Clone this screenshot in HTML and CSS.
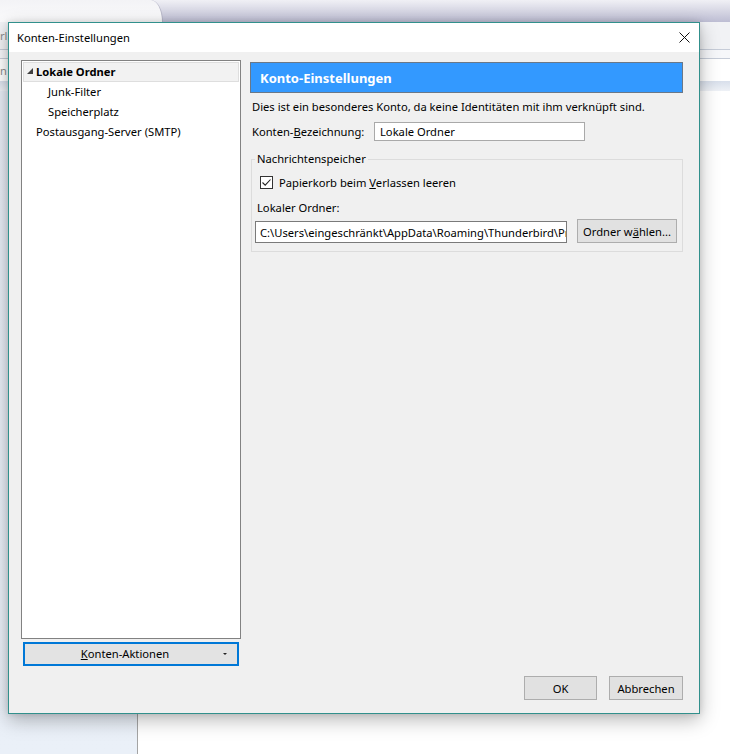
FILE: index.html
```html
<!DOCTYPE html>
<html lang="de">
<head>
<meta charset="utf-8">
<title>Konten-Einstellungen</title>
<link rel="stylesheet" href="styles.css">
</head>
<body>
<div class="app">
  <div class="tabbar"><div class="tab"></div><div class="tabfill"></div></div>
  <div class="toolbar">
    <div class="tb-row1"><span class="tb-text">rl</span></div>
    <div class="tb-row2"></div>
    <div class="tb-row3"><span class="tb-text">n</span></div>
    <div class="tb-band"></div>
  </div>
  <div class="workspace"><div class="pane-left"></div><div class="pane-right"></div></div>

  <div class="dialog">
    <div class="titlebar">
      <span class="title">Konten-Einstellungen</span>
      <span class="close"><svg width="11" height="11" viewBox="0 0 11 11"><path d="M0.5 0.5 L10.5 10.5 M10.5 0.5 L0.5 10.5" stroke="#111" stroke-width="1" fill="none"/></svg></span>
    </div>
    <div class="body">
      <div class="leftcol">
        <div class="tree">
          <div class="tree-row sel"><svg class="twisty" width="6" height="6" viewBox="0 0 6 6"><polygon points="6,0 6,6 0,6" fill="#404040"/></svg><span>Lokale Ordner</span></div>
          <div class="tree-row child">Junk-Filter</div>
          <div class="tree-row child">Speicherplatz</div>
          <div class="tree-row top">Postausgang-Server (SMTP)</div>
        </div>
        <div class="actions"><span class="actions-label"><u>K</u>onten-Aktionen</span><span class="arrow"></span></div>
      </div>
      <div class="rightcol">
        <div class="header">Konto-Einstellungen</div>
        <p class="desc">Dies ist ein besonderes Konto, da keine Identitäten mit ihm verknüpft sind.</p>
        <div class="field-row">
          <span class="field-label">Konten-<u>B</u>ezeichnung:</span>
          <div class="input name">Lokale Ordner</div>
        </div>
        <fieldset class="group">
          <legend>Nachrichtenspeicher</legend>
          <div class="check-row">
            <span class="checkbox"><svg width="11" height="11" viewBox="0 0 11 11"><path d="M1.5 5.5 L4.2 8.2 L9.5 2.5" stroke="#222" stroke-width="1.1" fill="none"/></svg></span>
            <span>Papierkorb beim <u>V</u>erlassen leeren</span>
          </div>
          <div class="sub-label">Lokaler Ordner:</div>
          <div class="path-row">
            <div class="input path"><span class="path-text">C:\Users\eingeschränkt\AppData\Roaming\Thunderbird\Profiles</span></div>
            <div class="btn pick">Ordner w<u>ä</u>hlen...</div>
          </div>
        </fieldset>
        <div class="spacer"></div>
        <div class="buttons">
          <div class="btn dlg ok">OK</div>
          <div class="btn dlg cancel">Abbrechen</div>
        </div>
      </div>
    </div>
  </div>
</div>
</body>
</html>
```

FILE: styles.css
```css
* { box-sizing: border-box; }
html, body { margin: 0; padding: 0; }
body {
  width: 730px;
  height: 754px;
  overflow: hidden;
  background: #fff;
  font-family: "Noto Sans", "Open Sans", sans-serif;
  font-size: 11.2px;
  color: #000;
}
.app {
  position: relative;
  width: 730px;
  height: 754px;
  display: flex;
  flex-direction: column;
}

/* background application */
.tabbar {
  height: 22px;
  display: flex;
  background: linear-gradient(#f0f0f5, #bdbdd3);
}
.tab {
  width: 163px;
  background: linear-gradient(#f3f3f6, #fbfbfc);
  border-top-right-radius: 12px 22px;
  border-right: 1px solid #b4b4c6;
}
.tabfill { flex: 1; }
.toolbar { display: flex; flex-direction: column; }
.tb-row1 {
  height: 28px;
  background: #f1f2f5;
  border-bottom: 1px solid #c6ccd8;
  display: flex;
  align-items: center;
}
.tb-row2 {
  height: 9px;
  background: #f6f7fa;
  border-bottom: 1px solid #c6ccd8;
}
.tb-row3 {
  height: 22px;
  background: #fff;
  display: flex;
  align-items: center;
}
.tb-text { color: #8a8a8a; }
.tb-band {
  height: 10px;
  background: linear-gradient(#d8dfeb, #eef1f6);
}
.workspace { flex: 1; display: flex; }
.pane-left {
  width: 138px;
  background: linear-gradient(#e6ebf4, #eaf0f8);
  border-right: 1px solid #a4a4a4;
}
.pane-right { flex: 1; background: #fff; }

/* dialog window */
.dialog {
  position: absolute;
  left: 8px;
  top: 22px;
  width: 692px;
  height: 692px;
  border: 1px solid #31908c;
  background: #f0f0f0;
  display: flex;
  flex-direction: column;
  box-shadow: 0 6px 18px rgba(0, 0, 0, 0.28), 0 0 6px rgba(0, 0, 0, 0.12);
}
.titlebar {
  height: 29px;
  flex-shrink: 0;
  background: #fff;
  display: flex;
  align-items: center;
  justify-content: space-between;
  padding: 0 9px 1px 8px;
}
.close { display: flex; width: 11px; height: 11px; margin-top: 1px; }

.body {
  flex: 1;
  min-height: 0;
  display: flex;
  gap: 9px;
  padding: 8px 16px 13px 12px;
}
.leftcol {
  width: 220px;
  flex-shrink: 0;
  display: flex;
  flex-direction: column;
  padding-bottom: 34px;
}
.tree {
  flex: 1;
  background: #fff;
  border: 1px solid #828282;
  padding: 1px;
}
.tree-row {
  height: 20px;
  display: flex;
  align-items: center;
  padding-left: 13px;
  padding-bottom: 1px;
  white-space: nowrap;
}
.tree-row.sel {
  padding-left: 3px;
  background: #f2f2f2;
  border: 1px solid #dedede;
  font-weight: bold;
}
.twisty { margin: 0 3px 1px 0; }
.tree-row.child { padding-left: 25px; }
.actions {
  height: 24px;
  margin: 3px 2px 0 2px;
  border: 2px solid #0078d7;
  background: #e3e3e3;
  display: flex;
  align-items: center;
  padding-bottom: 1px;
}
.actions-label { flex: 1; text-align: center; padding-left: 2px; }
.arrow {
  width: 0;
  height: 0;
  border-left: 2px solid transparent;
  border-right: 2px solid transparent;
  border-top: 2px solid #222;
  margin-right: 10px;
}

.rightcol {
  flex: 1;
  min-width: 0;
  display: flex;
  flex-direction: column;
}
.header {
  margin-top: 2px;
  height: 31px;
  background: #3399ff;
  border: 1px solid #6a7888;
  color: #fff;
  font-weight: bold;
  font-size: 13px;
  display: flex;
  align-items: center;
  padding-left: 9px;
}
.desc {
  margin: 6px 0 0 2px;
  line-height: 16px;
}
.field-row {
  margin-top: 7px;
  display: flex;
  align-items: center;
  padding-left: 2px;
}
.field-label { width: 122px; padding-bottom: 1px; }
.input {
  background: #fff;
  border: 1px solid #a9a9a9;
  display: flex;
  align-items: center;
  white-space: nowrap;
  overflow: hidden;
  min-width: 0;
}
.input.name { width: 211px; height: 19px; padding-left: 5px; }

.group {
  margin: 10px 0 0 1px;
  padding: 0 5px 8px 3px;
  border: 1px solid #dcdcdc;
  min-width: 0;
}
.group legend {
  padding: 0 2px;
  line-height: 16px;
}
.check-row {
  margin-top: 7px;
  height: 16px;
  display: flex;
  align-items: center;
  padding-left: 5px;
}
.checkbox {
  width: 13px;
  height: 13px;
  border: 1px solid #333;
  background: #fff;
  display: flex;
  align-items: center;
  justify-content: center;
  margin-right: 6px;
  margin-top: 1px;
}
.sub-label {
  margin-top: 10px;
  line-height: 16px;
  padding-left: 2px;
}
.path-row {
  margin-top: 3px;
  display: flex;
  align-items: flex-end;
  gap: 10px;
}
.input.path {
  flex: 1;
  height: 22px;
  padding-left: 4px;
  border-color: #7a7a7a;
}
.path-text { overflow: hidden; flex: 1; min-width: 0; }
.btn {
  background: #e1e1e1;
  border: 1px solid #adadad;
  display: flex;
  align-items: center;
  justify-content: center;
  white-space: nowrap;
  flex-shrink: 0;
}
.btn.pick { width: 100px; height: 24px; }
.spacer { flex: 1; }
.buttons {
  display: flex;
  justify-content: flex-end;
  gap: 12px;
}
.btn.dlg { height: 24px; }
.btn.ok { width: 73px; }
.btn.cancel { width: 74px; }
```
